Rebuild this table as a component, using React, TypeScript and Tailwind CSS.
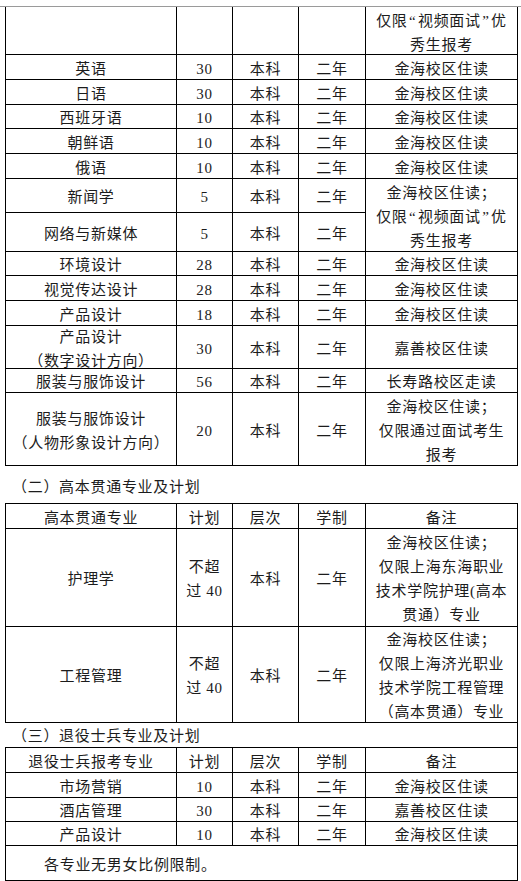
import React from "react";

const font = "font-['Liberation_Serif','Noto_Sans_CJK_SC',serif]";

function C({ children, className = "", pt = "pt-[3px]" }: { children?: React.ReactNode; className?: string; pt?: string }) {
  return (
    <div className={`bg-white flex items-center justify-center text-center whitespace-nowrap leading-[24px] ${pt} ${className}`}>
      {children}
    </div>
  );
}

function Row({ name, n, note, nameCls = "" }: { name: React.ReactNode; n: React.ReactNode; note?: React.ReactNode; nameCls?: string }) {
  return (
    <>
      <C className={nameCls}>{name}</C>
      <C>{n}</C>
      <C>本科</C>
      <C>二年</C>
      {note !== undefined && <C>{note}</C>}
    </>
  );
}

function Q() {
  return (
    <>
      仅限<span className="mx-[1.5px]">“</span>视频面试<span className="mx-[1.5px]">”</span>优
    </>
  );
}

export default function App() {
  const jh = "金海校区住读";
  return (
    <div className={`w-[521px] h-[881px] bg-white text-[#1c1c1c] text-[15px] tracking-[0.7px] ${font} overflow-hidden`}>
      <div className="mt-[6px] border-t border-[#9a9a9a]">
        {/* Table 1 */}
        <div className="ml-[5px] w-[513px] grid grid-cols-[170px_55px_65px_66px_151px] grid-rows-[47px_24px_24px_23px_24px_24px_33px_38px_23px_24px_24px_42px_23px_72px] gap-px bg-black px-px pb-px">
          <C />
          <C />
          <C />
          <C />
          <C pt="pt-[5px]">
            <span>
              <Q />
              <br />
              秀生报考
            </span>
          </C>
          <Row name="英语" n="30" note={jh} />
          <Row name="日语" n="30" note={jh} />
          <Row name="西班牙语" n="10" note={jh} />
          <Row name="朝鲜语" n="10" note={jh} />
          <Row name="俄语" n="10" note={jh} />
          <C>新闻学</C>
          <C>5</C>
          <C>本科</C>
          <C>二年</C>
          <C className="row-span-2">
            <span>
              金海校区住读；
              <br />
              <Q />
              <br />
              秀生报考
            </span>
          </C>
          <Row name="网络与新媒体" n="5" />
          <Row name="环境设计" n="28" note={jh} />
          <Row name="视觉传达设计" n="28" note={jh} />
          <Row name="产品设计" n="18" note={jh} />
          <Row
            name={
              <span>
                产品设计
                <br />
                （数字设计方向）
              </span>
            }
            nameCls="leading-[17px]"
            n="30"
            note="嘉善校区住读"
          />
          <Row name="服装与服饰设计" n="56" note="长寿路校区走读" />
          <Row
            name={
              <span>
                服装与服饰设计
                <br />
                （人物形象设计方向）
              </span>
            }
            nameCls="leading-[17px]"
            n="20"
            note={
              <span>
                金海校区住读；
                <br />
                仅限通过面试考生
                <br />
                报考
              </span>
            }
          />
        </div>

        {/* Title 2 */}
        <div className="h-[37px] pt-[9px] pl-[12px] leading-[24px]">（二）高本贯通专业及计划</div>

        {/* Table 2 */}
        <div className="ml-[5px] w-[513px] grid grid-cols-[170px_55px_65px_66px_151px] grid-rows-[24px_97px_95px] gap-px bg-black p-px">
          <C>高本贯通专业</C>
          <C>计划</C>
          <C>层次</C>
          <C>学制</C>
          <C>备注</C>
          <Row
            name="护理学"
            n={
              <span>
                不超
                <br />
                过 40
              </span>
            }
            note={
              <span>
                金海校区住读；
                <br />
                仅限上海东海职业
                <br />
                技术学院护理(高本
                <br />
                贯通）专业
              </span>
            }
          />
          <Row
            name="工程管理"
            n={
              <span>
                不超
                <br />
                过 40
              </span>
            }
            note={
              <span>
                金海校区住读；
                <br />
                仅限上海济光职业
                <br />
                技术学院工程管理
                <br />
                （高本贯通）专业
              </span>
            }
          />
        </div>

        {/* Title 3 */}
        <div className="ml-[5px] w-[513px] h-[24px] border-r border-black flex items-center">
          <span className="pl-[7px] leading-[24px] pt-[2px]">（三）退役士兵专业及计划</span>
        </div>

        {/* Table 3 */}
        <div className="ml-[5px] w-[513px] grid grid-cols-[170px_55px_65px_66px_151px] grid-rows-[24px_24px_23px_23px_34px] gap-px bg-black p-px">
          <C>退役士兵报考专业</C>
          <C>计划</C>
          <C>层次</C>
          <C>学制</C>
          <C>备注</C>
          <Row name="市场营销" n="10" note={jh} />
          <Row name="酒店管理" n="30" note="嘉善校区住读" />
          <Row name="产品设计" n="10" note={jh} />
          <C className="col-span-5 !justify-start pl-[38px]">各专业无男女比例限制。</C>
        </div>
      </div>
    </div>
  );
}
